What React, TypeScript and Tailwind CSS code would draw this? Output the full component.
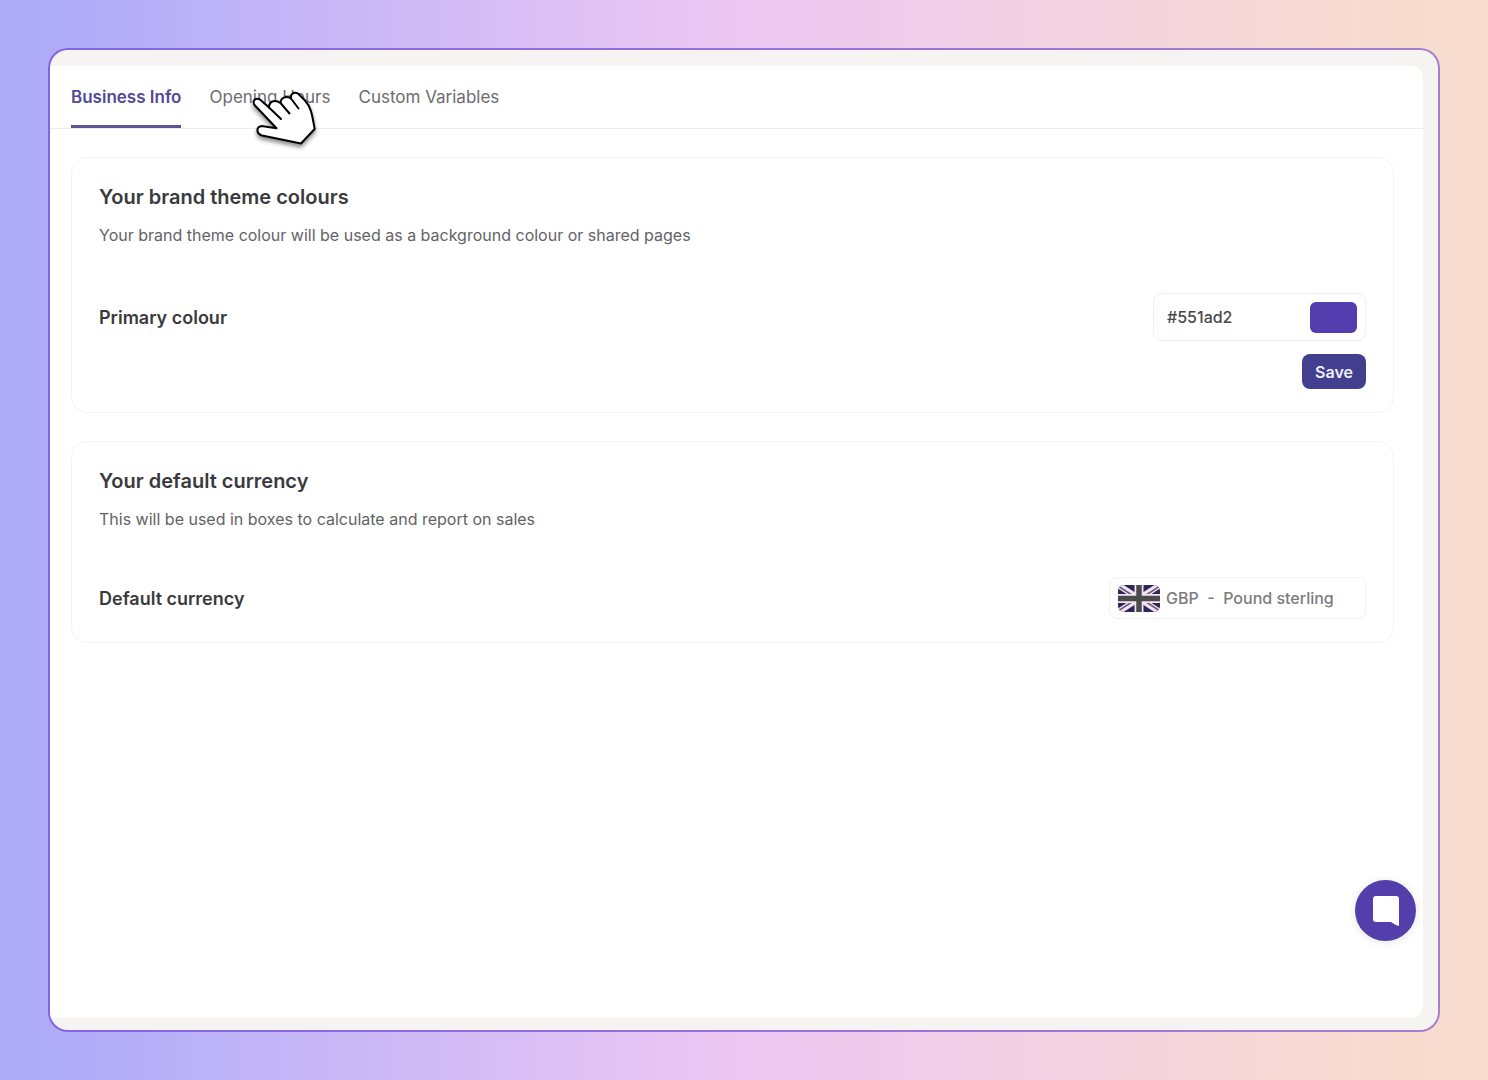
import { useState } from 'react'
import type { ReactNode } from 'react'

const TABS = ['Business Info', 'Opening Hours', 'Custom Variables']

function Card({ title, description, children }: { title: string; description: string; children: ReactNode }) {
  return (
    <section className="border border-[#f3f3f4] rounded-2xl px-[27px] py-[23px]">
      <h2 className="text-[20px] leading-8 font-semibold text-[#3a3a3c]">{title}</h2>
      <p className="mt-2 text-[16px] leading-7 text-[#636366]">{description}</p>
      {children}
    </section>
  )
}

function UnionJack() {
  return (
    <svg viewBox="0 0 42 27" className="w-[42px] h-[27px] rounded-md shrink-0" aria-hidden="true">
      <rect width="42" height="27" fill="#2b2757" />
      <path d="M0 0L42 27M42 0L0 27" stroke="#f3e3f5" strokeWidth="6" />
      <path d="M0 1L17 12M42 26L25 15M42 1L25 12M0 26L17 15" stroke="#6a5f72" strokeWidth="1.5" />
      <path d="M21 0V27M0 13.5H42" stroke="#f3e3f5" strokeWidth="9" />
      <path d="M21 0V27M0 13.5H42" stroke="#4b4b4b" strokeWidth="5.5" />
    </svg>
  )
}

function HandCursor() {
  return (
    <svg
      viewBox="0 0 90 75"
      className="absolute left-[190px] top-[14px] w-[90px] h-[75px] pointer-events-none drop-shadow-[0_3px_2px_rgba(0,0,0,0.45)]"
      aria-hidden="true"
      stroke="#000"
      strokeWidth="2"
      strokeLinecap="round"
      strokeLinejoin="round"
    >
      <path
        d="M36.500 48.300L14.500 25C12 21 15.500 17 20 19.500L29 27.500C29 22 34 18.500 40.500 23C40.500 17.500 46 15.500 51 18.500C50 14 54.500 11 58.500 14L65 20.500C71 27 72 34 74.700 49L61 63.500L22 55.500C16 53.500 16 47 21.500 46Z"
        fill="#fff"
      />
      <path d="M29 27.500L41 39M40.500 23L49.500 33.500M51 18.500L58.500 28.500" fill="none" />
    </svg>
  )
}

export default function App() {
  const [tab, setTab] = useState(TABS[0])
  const [colour, setColour] = useState('#551ad2')

  return (
    <div className="min-h-screen flex p-12 font-[Inter,sans-serif] bg-[linear-gradient(90deg,#adabf7_0%,#b1adf8_6%,#ecc7f3_49%,#f8dbd0_92%,#f9dccf_100%)]">
      <div className="flex-1 flex rounded-[20px] bg-[linear-gradient(90deg,#8563e6,#a77fd0)] p-0.5">
        <div className="flex-1 flex rounded-[18px] bg-[#f5f4f2] pt-4 pr-[15px] pb-3 overflow-hidden">
          <main className="relative flex-1 bg-white rounded-r-xl">
            <nav className="relative flex gap-7 h-[63px] pl-[21px] border-b border-[#ececee]">
              {TABS.map(name => (
                <button
                  key={name}
                  onClick={() => setTab(name)}
                  className={
                    name === tab
                      ? 'pt-1 text-[17px] font-semibold text-[#514a96] border-b-3 border-[#5c5596]'
                      : 'pt-1 text-[17px] text-[#6c6c70] border-b-3 border-transparent'
                  }
                >
                  {name}
                </button>
              ))}
              <HandCursor />
            </nav>

            <div className="flex flex-col gap-7 pl-[21px] pr-[29px] pt-7">
              <Card
                title="Your brand theme colours"
                description="Your brand theme colour will be used as a background colour or shared pages"
              >
                <div className="mt-11 flex items-center justify-between">
                  <label htmlFor="colour" className="text-[18px] font-semibold text-[#3a3a3c]">
                    Primary colour
                  </label>
                  <div className="flex items-center w-[213px] h-12 pl-[13px] pr-2 border border-[#f0f0f1] rounded-lg">
                    <input
                      id="colour"
                      value={colour}
                      onChange={e => setColour(e.target.value)}
                      className="flex-1 min-w-0 text-[16px] font-medium text-[#48484a] outline-none"
                    />
                    <button aria-label="Pick primary colour" className="w-[47px] h-[31px] rounded-md bg-[#533eb0]" />
                  </div>
                </div>
                <div className="mt-[13px] flex justify-end">
                  <button className="w-16 h-[35px] rounded-lg bg-[#42408e] text-[16px] font-semibold text-[#f0effa]">
                    Save
                  </button>
                </div>
              </Card>

              <Card
                title="Your default currency"
                description="This will be used in boxes to calculate and report on sales"
              >
                <div className="mt-11 flex items-center justify-between">
                  <label htmlFor="currency" className="text-[18px] font-semibold text-[#3a3a3c]">
                    Default currency
                  </label>
                  <div className="flex items-center gap-1.5 w-[257px] h-[42px] pl-2 border border-[#f2f2f3] rounded-lg">
                    <UnionJack />
                    <select
                      id="currency"
                      className="flex-1 min-w-0 appearance-none text-[16px] font-medium text-[#7c7c7f] outline-none"
                    >
                      <option>{'GBP\u00a0 -\u00a0 Pound sterling'}</option>
                    </select>
                  </div>
                </div>
              </Card>
            </div>

            <button
              aria-label="Open chat"
              className="absolute right-[7px] bottom-[77px] size-[61px] rounded-full bg-[#533eab] shadow-[0_1px_8px_rgba(0,0,0,0.12)] flex items-center justify-center"
            >
              <svg viewBox="0 0 28 32" className="w-7 h-8" aria-hidden="true">
                <path d="M4 1H24Q27 1 27 4V31Q23 30 19 27H4Q1 27 1 24V4Q1 1 4 1Z" fill="#fff" />
              </svg>
            </button>
          </main>
        </div>
      </div>
    </div>
  )
}
